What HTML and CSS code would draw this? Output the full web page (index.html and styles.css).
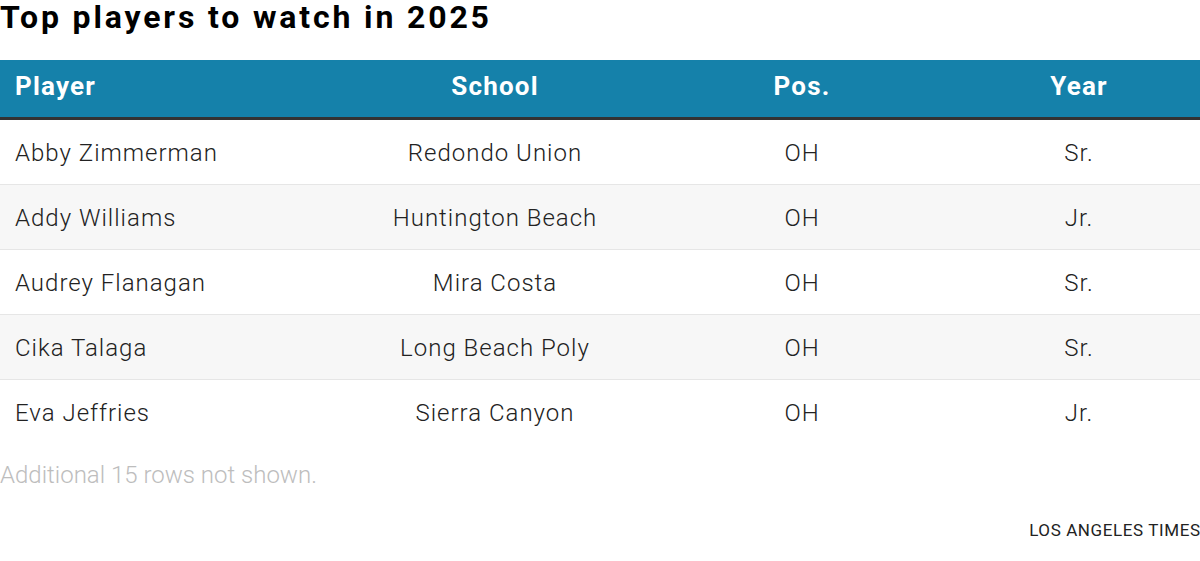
FILE: index.html
```html
<!DOCTYPE html>
<html>
<head>
<meta charset="utf-8">
<link rel="stylesheet" href="styles.css">
</head>
<body>
<div class="wrap">
  <h1 class="title">Top players to watch in 2025</h1>
  <table class="tbl">
    <colgroup>
      <col class="c1"><col class="c2"><col class="c3"><col class="c4">
    </colgroup>
    <thead>
      <tr><th class="left">Player</th><th>School</th><th>Pos.</th><th>Year</th></tr>
    </thead>
    <tbody>
      <tr><td class="left">Abby Zimmerman</td><td>Redondo Union</td><td>OH</td><td>Sr.</td></tr>
      <tr><td class="left">Addy Williams</td><td>Huntington Beach</td><td>OH</td><td>Jr.</td></tr>
      <tr><td class="left">Audrey Flanagan</td><td>Mira Costa</td><td>OH</td><td>Sr.</td></tr>
      <tr><td class="left">Cika Talaga</td><td>Long Beach Poly</td><td>OH</td><td>Sr.</td></tr>
      <tr><td class="left">Eva Jeffries</td><td>Sierra Canyon</td><td>OH</td><td>Jr.</td></tr>
    </tbody>
  </table>
  <p class="note">Additional 15 rows not shown.</p>
  <p class="credit">LOS ANGELES TIMES</p>
</div>
</body>
</html>
```
FILE: styles.css
```css
html, body {
  margin: 0;
  padding: 0;
  background: #fff;
}
.wrap {
  font-family: Roboto, "Liberation Sans", sans-serif;
  width: 1200px;
}
.title {
  margin: 0;
  height: 60px;
  font-size: 32px;
  line-height: 34px;
  font-weight: 700;
  color: #000;
  letter-spacing: 2.85px;
}
.tbl {
  width: 1200px;
  border-collapse: collapse;
  table-layout: fixed;
}
.c1 { width: 344px; }
.c2 { width: 302px; }
.c3 { width: 312px; }
.c4 { width: 242px; }
.tbl th {
  background: #1581aa;
  color: #fff;
  font-size: 26px;
  font-weight: 700;
  letter-spacing: 1.2px;
  height: 58px;
  padding: 0 15px 4px;
  text-align: center;
  border-bottom: 3px solid #333;
  box-sizing: border-box;
}
.tbl td {
  height: 65px;
  box-sizing: border-box;
  padding: 2px 15px 0;
  font-size: 24px;
  font-weight: 300;
  letter-spacing: 1px;
  color: #222;
  text-align: center;
  border-bottom: 1px solid #e6e6e6;
}
.tbl tbody tr:first-child td {
  height: 66px;
}
.tbl tbody tr:last-child td {
  border-bottom: 0;
}
.tbl tbody tr:nth-child(even) td {
  background: #f7f7f7;
}
.tbl .left { text-align: left; }
.note {
  margin: 17px 0 0;
  font-size: 24px;
  line-height: 28px;
  font-weight: 300;
  color: #bdbdbd;
}
.credit {
  margin: 31px -0.6px 0 0;
  text-align: right;
  font-size: 17px;
  line-height: 20px;
  letter-spacing: 0.6px;
  font-weight: 400;
  color: #222;
}
```
